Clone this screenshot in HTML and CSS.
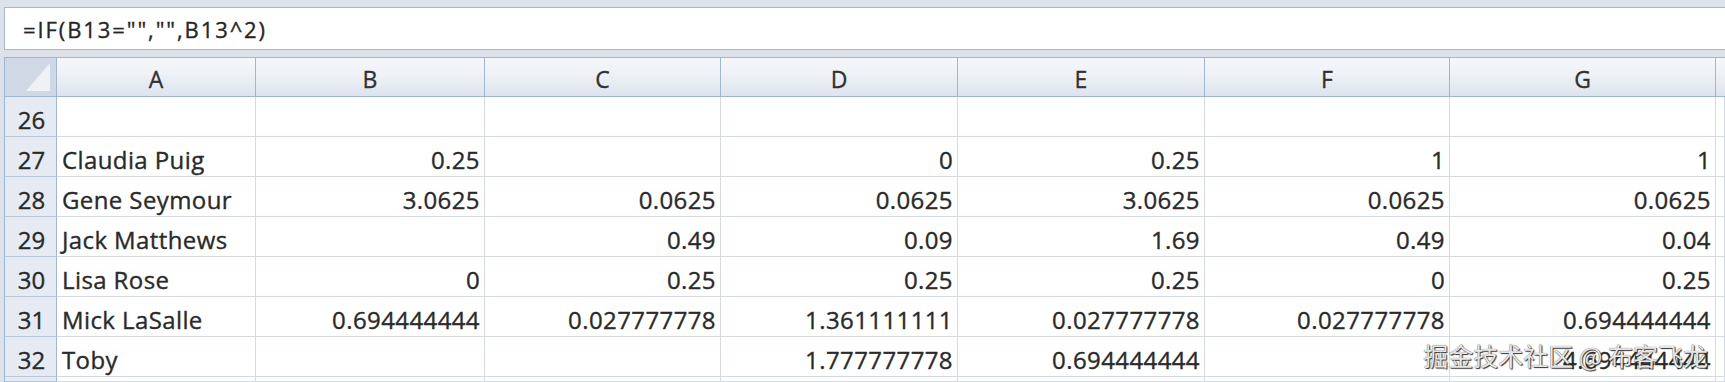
FILE: index.html
```html
<!DOCTYPE html>
<html>
<head>
<meta charset="utf-8">
<link rel="stylesheet" href="styles.css">
</head>
<body>
<div class="app">
  <div class="formula">=IF(B13="","",B13^2)</div>
  <div class="sheet">
    <div class="corner"><span class="tri"></span></div>
    <div class="colh">A</div><div class="colh">B</div><div class="colh">C</div><div class="colh">D</div><div class="colh">E</div><div class="colh">F</div><div class="colh">G</div><div class="colh last"></div>

    <div class="rowh">26</div><div class="c"></div><div class="c"></div><div class="c"></div><div class="c"></div><div class="c"></div><div class="c"></div><div class="c"></div><div class="c"></div>

    <div class="rowh">27</div><div class="c t">Claudia Puig</div><div class="c n">0.25</div><div class="c n"></div><div class="c n">0</div><div class="c n">0.25</div><div class="c n">1</div><div class="c n">1</div><div class="c"></div>

    <div class="rowh">28</div><div class="c t">Gene Seymour</div><div class="c n">3.0625</div><div class="c n">0.0625</div><div class="c n">0.0625</div><div class="c n">3.0625</div><div class="c n">0.0625</div><div class="c n">0.0625</div><div class="c"></div>

    <div class="rowh">29</div><div class="c t">Jack Matthews</div><div class="c n"></div><div class="c n">0.49</div><div class="c n">0.09</div><div class="c n">1.69</div><div class="c n">0.49</div><div class="c n">0.04</div><div class="c"></div>

    <div class="rowh">30</div><div class="c t">Lisa Rose</div><div class="c n">0</div><div class="c n">0.25</div><div class="c n">0.25</div><div class="c n">0.25</div><div class="c n">0</div><div class="c n">0.25</div><div class="c"></div>

    <div class="rowh">31</div><div class="c t">Mick LaSalle</div><div class="c n">0.694444444</div><div class="c n">0.027777778</div><div class="c n">1.361111111</div><div class="c n">0.027777778</div><div class="c n">0.027777778</div><div class="c n">0.694444444</div><div class="c"></div>

    <div class="rowh">32</div><div class="c t">Toby</div><div class="c n"></div><div class="c n"></div><div class="c n">1.777777778</div><div class="c n">0.694444444</div><div class="c n"></div><div class="c n">4.694444444</div><div class="c"></div>

    <div class="rowh"></div><div class="c"></div><div class="c"></div><div class="c"></div><div class="c"></div><div class="c"></div><div class="c"></div><div class="c"></div><div class="c"></div>
  </div>
</div>
<div class="watermark">掘金技术社区 @ 布客飞龙</div>
</body>
</html>
```

FILE: styles.css
```css
html, body {
  margin: 0;
  padding: 0;
}
body {
  width: 1725px;
  height: 382px;
  overflow: hidden;
  background: #dde2ea;
  font-family: "Open Sans", "Liberation Sans", sans-serif;
  color: #2a2a2a;
  position: relative;
}
.app {
  padding: 7px 0 0 4px;
}
.formula {
  box-sizing: border-box;
  height: 43px;
  border: 1px solid #a9b7c8;
  border-right: none;
  background: #fff;
  display: flex;
  align-items: center;
  padding-left: 18px;
  font-size: 22px;
  letter-spacing: 1.9px;
  color: #262626;
  -webkit-text-stroke: 0.35px #262626;
  margin-bottom: 7px;
}
.sheet {
  display: grid;
  grid-template-columns: 52px 199px 229px 236px 237px 247px 245px 266px 1fr;
  grid-template-rows: 39px repeat(7, 40px) 5px;
  border-left: 1px solid #9eb6ce;
  border-top: 1px solid #9eb6ce;
  background: #fff;
}
.corner {
  box-sizing: border-box;
  position: relative;
  background: #cfd8e4;
  border-right: 1px solid #9eb6ce;
  border-bottom: 1px solid #9eb6ce;
}
.tri {
  position: absolute;
  right: 6px;
  bottom: 5px;
  width: 0;
  height: 0;
  border-left: 24px solid transparent;
  border-bottom: 28px solid #eef2f7;
}
.colh {
  box-sizing: border-box;
  background: linear-gradient(#f5f7fa 0%, #eef1f6 45%, #dde4ee 100%);
  border-right: 1px solid #9eb6ce;
  border-bottom: 1px solid #9eb6ce;
  display: flex;
  align-items: flex-end;
  justify-content: center;
  font-size: 23px;
  line-height: 24px;
  padding-bottom: 5px;
  color: #303030;
  -webkit-text-stroke: 0.3px #303030;
}
.colh.last {
  border-right: none;
}
.rowh {
  box-sizing: border-box;
  background: #e6ebf3;
  border-right: 1px solid #9eb6ce;
  border-bottom: 1px solid #b9c7d8;
  display: flex;
  align-items: flex-end;
  justify-content: center;
  font-size: 24px;
  line-height: 24px;
  padding-bottom: 4px;
  padding-left: 2px;
  color: #2a2a2a;
  -webkit-text-stroke: 0.35px #2a2a2a;
}
.c {
  box-sizing: border-box;
  border-right: 1px solid #d4d9e2;
  border-bottom: 1px solid #d4d9e2;
  display: flex;
  align-items: flex-end;
  font-size: 24px;
  line-height: 24px;
  padding-bottom: 4px;
  white-space: nowrap;
  letter-spacing: 0.4px;
  -webkit-text-stroke: 0.35px #2a2a2a;
}
.t {
  padding-left: 5px;
  justify-content: flex-start;
}
.n {
  padding-right: 4px;
  justify-content: flex-end;
}
.watermark {
  position: absolute;
  right: 17px;
  bottom: 12px;
  font-family: "Noto Sans CJK SC", sans-serif;
  font-size: 25px;
  line-height: 30px;
  color: #e6e6e6;
  text-shadow: 1px 1px 1px #333, 0 0 1px #444;
  white-space: nowrap;
}
```
